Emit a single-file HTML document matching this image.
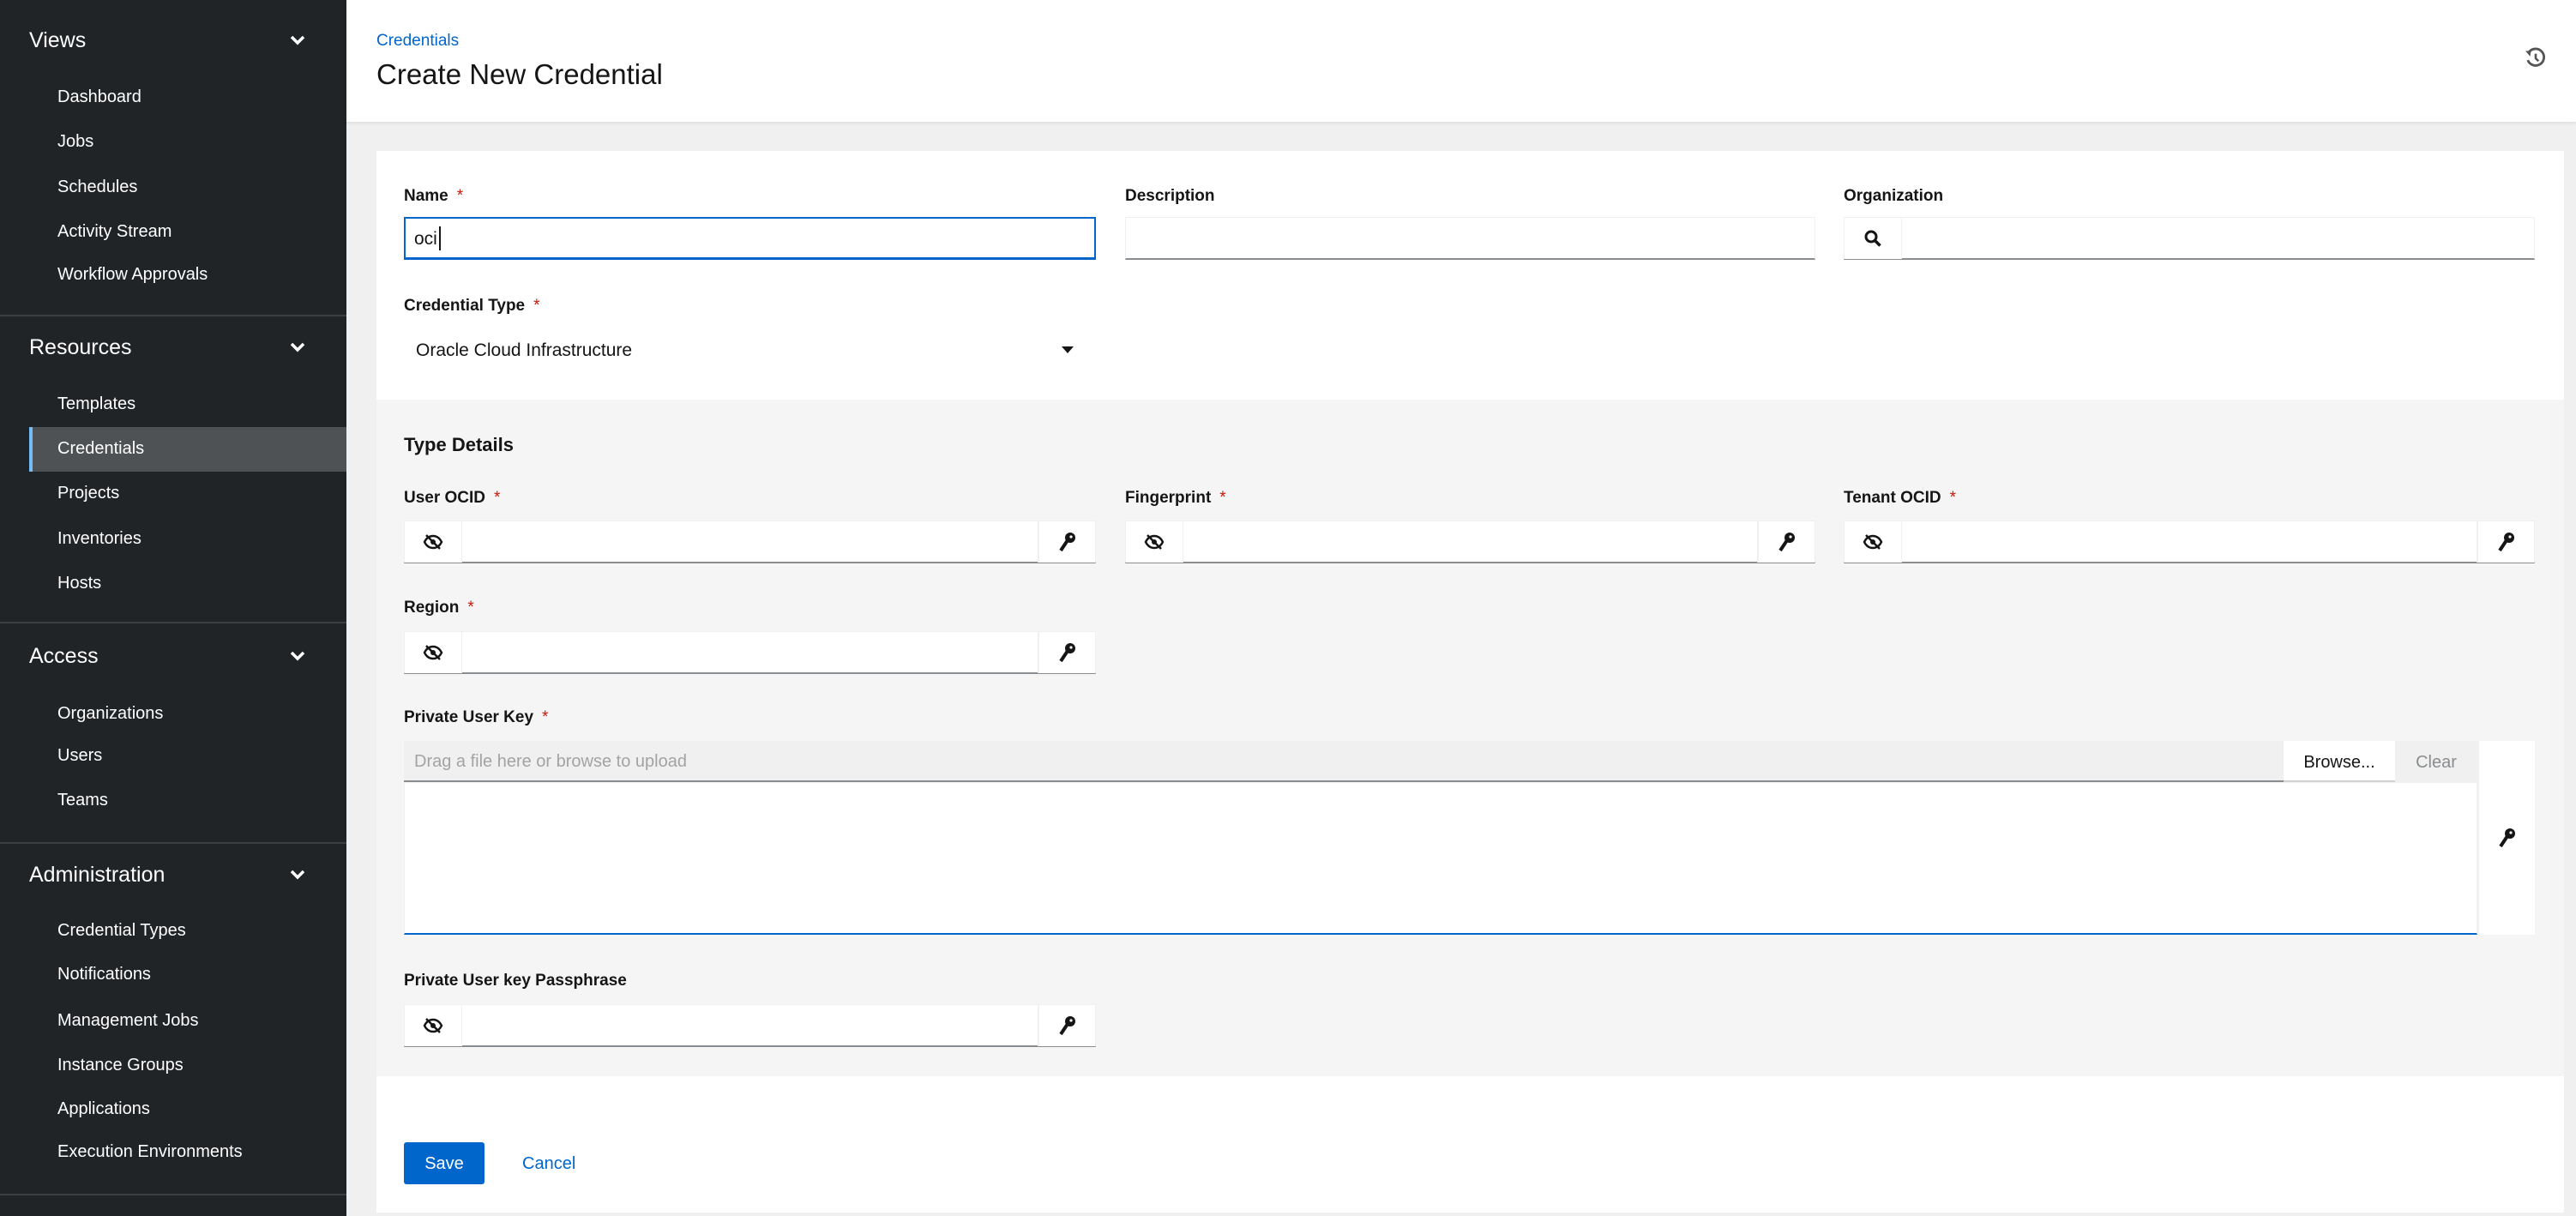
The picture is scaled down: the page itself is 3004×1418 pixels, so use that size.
<!DOCTYPE html>
<html><head><meta charset="utf-8"><style>
*{box-sizing:border-box;margin:0;padding:0}
body{width:3004px;height:1418px;overflow:hidden;font-family:"Liberation Sans",sans-serif;background:#f0f0f0;position:relative;color:#151515}
.sb{position:absolute;left:0;top:0;width:404px;height:1418px;background:#212427}
.sh{position:absolute;left:34px;color:#fff;font-size:25px}
.chev{position:absolute;left:336px;width:22px;height:22px}
.si{position:absolute;left:67px;color:#fff;font-size:20px}
.dv{position:absolute;left:0;width:404px;height:2px;background:#3c3f42}
.act{position:absolute;left:34px;top:498px;width:370px;height:52px;background:#4f5255;border-left:4px solid #73bcf7}
.hdr{position:absolute;left:404px;top:0;width:2600px;height:142px;background:#fff;box-shadow:0 2px 4px rgba(0,0,0,.08)}
.card{position:absolute;left:439px;top:176px;width:2551px;height:1238px;background:#fff}
.gray{position:absolute;left:439px;top:466px;width:2551px;height:789px;background:#f5f5f5}
.lbl{position:absolute;font-size:19px;font-weight:bold;color:#151515}
.lbl b{color:#c9190b;font-weight:normal;margin-left:10px}
.inp{position:absolute;height:50px;background:#fff;border:1px solid #f0f0f0;border-bottom:2px solid #8a8d90}
.ib{position:absolute;top:0;width:67px;height:48px;border-right:1px solid #f0f0f0;display:flex;align-items:center;justify-content:center;background:#fff}
.kb{position:absolute;top:0;right:0;width:67px;height:48px;border-left:2px solid #f0f0f0;display:flex;align-items:center;justify-content:center;background:#fff}
</style></head><body>
<div class="sb">
<div class="sh" style="top:33px">Views</div>
<div class="sh" style="top:391px">Resources</div>
<div class="sh" style="top:751px">Access</div>
<div class="sh" style="top:1006px">Administration</div>
<svg class="chev" style="top:36px" viewBox="0 0 22 22"><path d="M4 7l7 7 7-7" stroke="#fff" stroke-width="3.5" fill="none"/></svg>
<svg class="chev" style="top:394px" viewBox="0 0 22 22"><path d="M4 7l7 7 7-7" stroke="#fff" stroke-width="3.5" fill="none"/></svg>
<svg class="chev" style="top:754px" viewBox="0 0 22 22"><path d="M4 7l7 7 7-7" stroke="#fff" stroke-width="3.5" fill="none"/></svg>
<svg class="chev" style="top:1009px" viewBox="0 0 22 22"><path d="M4 7l7 7 7-7" stroke="#fff" stroke-width="3.5" fill="none"/></svg>
<div class="act"></div>
<div class="si" style="top:102px">Dashboard</div>
<div class="si" style="top:154px">Jobs</div>
<div class="si" style="top:207px">Schedules</div>
<div class="si" style="top:259px">Activity Stream</div>
<div class="si" style="top:309px">Workflow Approvals</div>
<div class="dv" style="top:367px"></div>
<div class="si" style="top:460px">Templates</div>
<div class="si" style="top:512px">Credentials</div>
<div class="si" style="top:564px">Projects</div>
<div class="si" style="top:617px">Inventories</div>
<div class="si" style="top:669px">Hosts</div>
<div class="dv" style="top:725px"></div>
<div class="si" style="top:821px">Organizations</div>
<div class="si" style="top:870px">Users</div>
<div class="si" style="top:922px">Teams</div>
<div class="dv" style="top:982px"></div>
<div class="si" style="top:1074px">Credential Types</div>
<div class="si" style="top:1125px">Notifications</div>
<div class="si" style="top:1179px">Management Jobs</div>
<div class="si" style="top:1231px">Instance Groups</div>
<div class="si" style="top:1282px">Applications</div>
<div class="si" style="top:1332px">Execution Environments</div>
<div class="dv" style="top:1392px"></div>
</div>
<div class="hdr">
<div style="position:absolute;left:35px;top:37px;font-size:19px;color:#0066cc">Credentials</div>
<div style="position:absolute;left:35px;top:68px;font-size:33px;color:#151515">Create New Credential</div>
<svg style="position:absolute;left:2540px;top:55px" width="26" height="26" viewBox="0 0 24 24"><path d="M5 5 A9 9 0 1 1 3.5 14" stroke="#555" stroke-width="2.6" fill="none"/><path d="M1 4 L7 4 L6 10 Z" fill="#555"/><path d="M12 7v5l3 3" stroke="#555" stroke-width="2.4" fill="none"/></svg>
</div>
<div class="card"></div>
<div class="gray"></div>

<div class="lbl" style="left:471px;top:218px">Name<b>*</b></div>
<div class="inp" style="left:471px;top:253px;width:807px;border:2px solid #0066cc;border-bottom:3px solid #0066cc"><span style="position:absolute;left:10px;top:12px;font-size:21px">oci</span><span style="position:absolute;left:39px;top:9px;width:2px;height:28px;background:#151515"></span></div>
<div class="lbl" style="left:1312px;top:218px">Description</div>
<div class="inp" style="left:1312px;top:253px;width:805px"></div>
<div class="lbl" style="left:2150px;top:218px">Organization</div>
<div class="inp" style="left:2150px;top:253px;width:806px"><div class="ib"><svg width="22" height="22" viewBox="0 0 22 22"><circle cx="9" cy="9" r="6" stroke="#151515" stroke-width="3" fill="none"/><path d="M13.5 13.5l6 6" stroke="#151515" stroke-width="3.5"/></svg></div></div>

<div class="lbl" style="left:471px;top:346px">Credential Type<b>*</b></div>
<div style="position:absolute;left:485px;top:397px;font-size:21px">Oracle Cloud Infrastructure</div>
<svg style="position:absolute;left:1236px;top:402px" width="18" height="12" viewBox="0 0 18 12"><path d="M2 2h14l-7 8z" fill="#151515"/></svg>

<div style="position:absolute;left:471px;top:506px;font-size:22px;font-weight:bold">Type Details</div>

<div class="lbl" style="left:471px;top:570px">User OCID<b>*</b></div>
<div class="lbl" style="left:1312px;top:570px">Fingerprint<b>*</b></div>
<div class="lbl" style="left:2150px;top:570px">Tenant OCID<b>*</b></div>
<div class="lbl" style="left:471px;top:698px">Region<b>*</b></div>
<div class="lbl" style="left:471px;top:826px">Private User Key<b>*</b></div>
<div class="lbl" style="left:471px;top:1133px">Private User key Passphrase</div>

<div id="fields"></div>

<div style="position:absolute;left:471px;top:864px;width:2192px;height:48px;background:#f0f0f0;border-bottom:2px solid #8a8d90"><span style="position:absolute;left:12px;top:13px;font-size:20px;color:#a2a3a5">Drag a file here or browse to upload</span></div>
<div style="position:absolute;left:2663px;top:864px;width:130px;height:48px;background:#fff;font-size:20px;text-align:center;line-height:50px;border-bottom:2px solid #d2d2d2">Browse...</div>
<div style="position:absolute;left:2793px;top:864px;width:96px;height:48px;background:#f0f0f0;font-size:20px;color:#8a8d90;text-align:center;line-height:50px">Clear</div>
<div style="position:absolute;left:471px;top:912px;width:2418px;height:178px;background:#fff;border:1px solid #f0f0f0;border-bottom:2px solid #0066cc"></div>
<div style="position:absolute;left:2889px;top:864px;width:67px;height:226px;background:#fff;border-left:2px solid #f0f0f0;display:flex;align-items:center;justify-content:center"><svg width="22" height="24" viewBox="0 0 22 24"><circle cx="14" cy="7" r="6" fill="#151515"/><path d="M11 10L3 22" stroke="#151515" stroke-width="4"/><circle cx="15" cy="6" r="1.6" fill="#fff"/></svg></div>

<div style="position:absolute;left:471px;top:1332px;width:94px;height:49px;background:#0066cc;border-radius:3px;color:#fff;font-size:20px;text-align:center;line-height:51px">Save</div>
<div style="position:absolute;left:609px;top:1346px;font-size:20px;color:#0066cc">Cancel</div>

<script>
var eye='<svg width="24" height="20" viewBox="0 0 24 20"><path d="M2 10C5 4 9 3 12 3s7 1 10 7c-3 6-7 7-10 7S5 16 2 10z" stroke="#151515" stroke-width="2.5" fill="none"/><circle cx="12" cy="10" r="3" fill="#151515"/><path d="M4 2l16 16" stroke="#151515" stroke-width="2.5"/></svg>';
var key='<svg width="22" height="24" viewBox="0 0 22 24"><circle cx="14" cy="7" r="6" fill="#151515"/><path d="M11 10L3 22" stroke="#151515" stroke-width="4"/><circle cx="15" cy="6" r="1.6" fill="#fff"/></svg>';
var f=[[471,607],[1312,607],[2150,607],[471,736],[471,1171]];
var w={471:807,1312:805,2150:806};
var h='';
f.forEach(function(p){h+='<div class="inp" style="left:'+p[0]+'px;top:'+p[1]+'px;width:'+w[p[0]]+'px"><div class="ib">'+eye+'</div><div class="kb">'+key+'</div></div>';});
document.getElementById('fields').innerHTML=h;
</script>
</body></html>
